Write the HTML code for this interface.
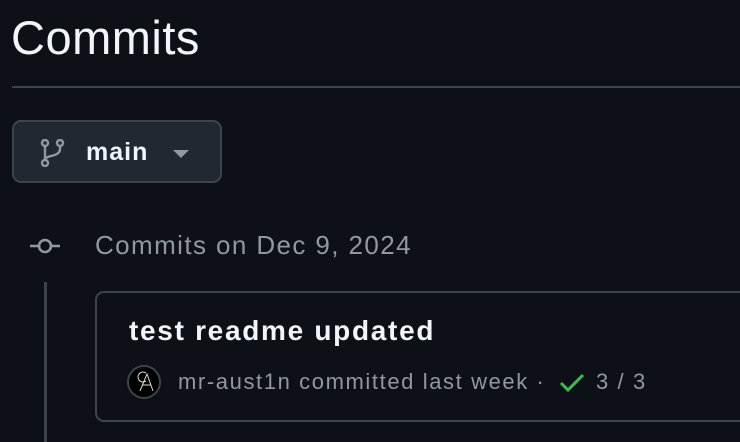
<!DOCTYPE html>
<html><head><style>
*{margin:0;padding:0;box-sizing:border-box}
body{width:740px;height:442px;background:#0d1117;font-family:"Liberation Sans",sans-serif;overflow:hidden;position:relative;color:#f0f6fc}
.h{position:absolute;left:11px;top:10px;font-size:47px;letter-spacing:0.5px;color:#f0f6fc}
.rule{position:absolute;left:12px;top:86px;width:740px;height:2px;background:#3d444d}
.btn{position:absolute;left:12px;top:120px;width:210px;height:63px;border:2px solid #3d444d;background:#212830;border-radius:9px}
.btn .t{position:absolute;left:72px;top:16px;font-size:25px;font-weight:bold;letter-spacing:1px;color:#f0f6fc}
.tl{position:absolute;left:44px;top:282px;width:3px;height:160px;background:#3d444d}
.date{position:absolute;left:95px;top:230px;font-size:26px;letter-spacing:1.4px;color:#9198a1}
.card{position:absolute;left:95px;top:291px;width:700px;height:131px;border:2px solid #3d444d;border-radius:9px}
.title{position:absolute;left:129px;top:315px;font-size:28px;letter-spacing:1.7px;font-weight:bold;color:#f0f6fc}
.meta{position:absolute;left:178px;top:369px;font-size:22px;letter-spacing:1.6px;color:#9198a1;white-space:nowrap}
</style></head><body>
<div class="h">Commits</div>
<div class="rule"></div>
<div class="btn">
<svg style="position:absolute;left:26px;top:17px" width="26" height="28" viewBox="0 0 26 28" fill="none" stroke="#9198a1" stroke-width="2.4"><circle cx="5" cy="4" r="3"/><circle cx="5" cy="24" r="3"/><circle cx="20" cy="4" r="3"/><path d="M5 7v14M20 7v3c0 4-4 6-9 7-4 1-6 2-6 4"/></svg>
<div class="t">main</div>
<svg style="position:absolute;left:159px;top:28px" width="16" height="9"><path d="M0 0h16L8 8z" fill="#9198a1"/></svg>
</div>
<svg style="position:absolute;left:28px;top:235px" width="34" height="22" fill="none" stroke="#9198a1" stroke-width="2.6"><circle cx="17" cy="11" r="6"/><path d="M2 11h9M23 11h9"/></svg>
<div class="date">Commits on Dec 9, 2024</div>
<div class="tl"></div>
<div class="card"></div>
<div class="title">test readme updated</div>
<svg style="position:absolute;left:127px;top:365px" width="34" height="34"><circle cx="17" cy="17" r="16" fill="#000" stroke="#3d444d" stroke-width="2"/><path d="M19 8a5 5 0 1 0 0 8M13 26l7-17 6 17M16 20h8" stroke="#ddd" stroke-width="1" fill="none"/></svg>
<div class="meta">mr-aust1n committed last week ·</div>
<svg style="position:absolute;left:559px;top:372px" width="26" height="22" fill="none" stroke="#3fb950" stroke-width="3"><path d="M2 11l7 7L24 3"/></svg>
<div class="meta" style="left:596px">3 / 3</div>
</body></html>
